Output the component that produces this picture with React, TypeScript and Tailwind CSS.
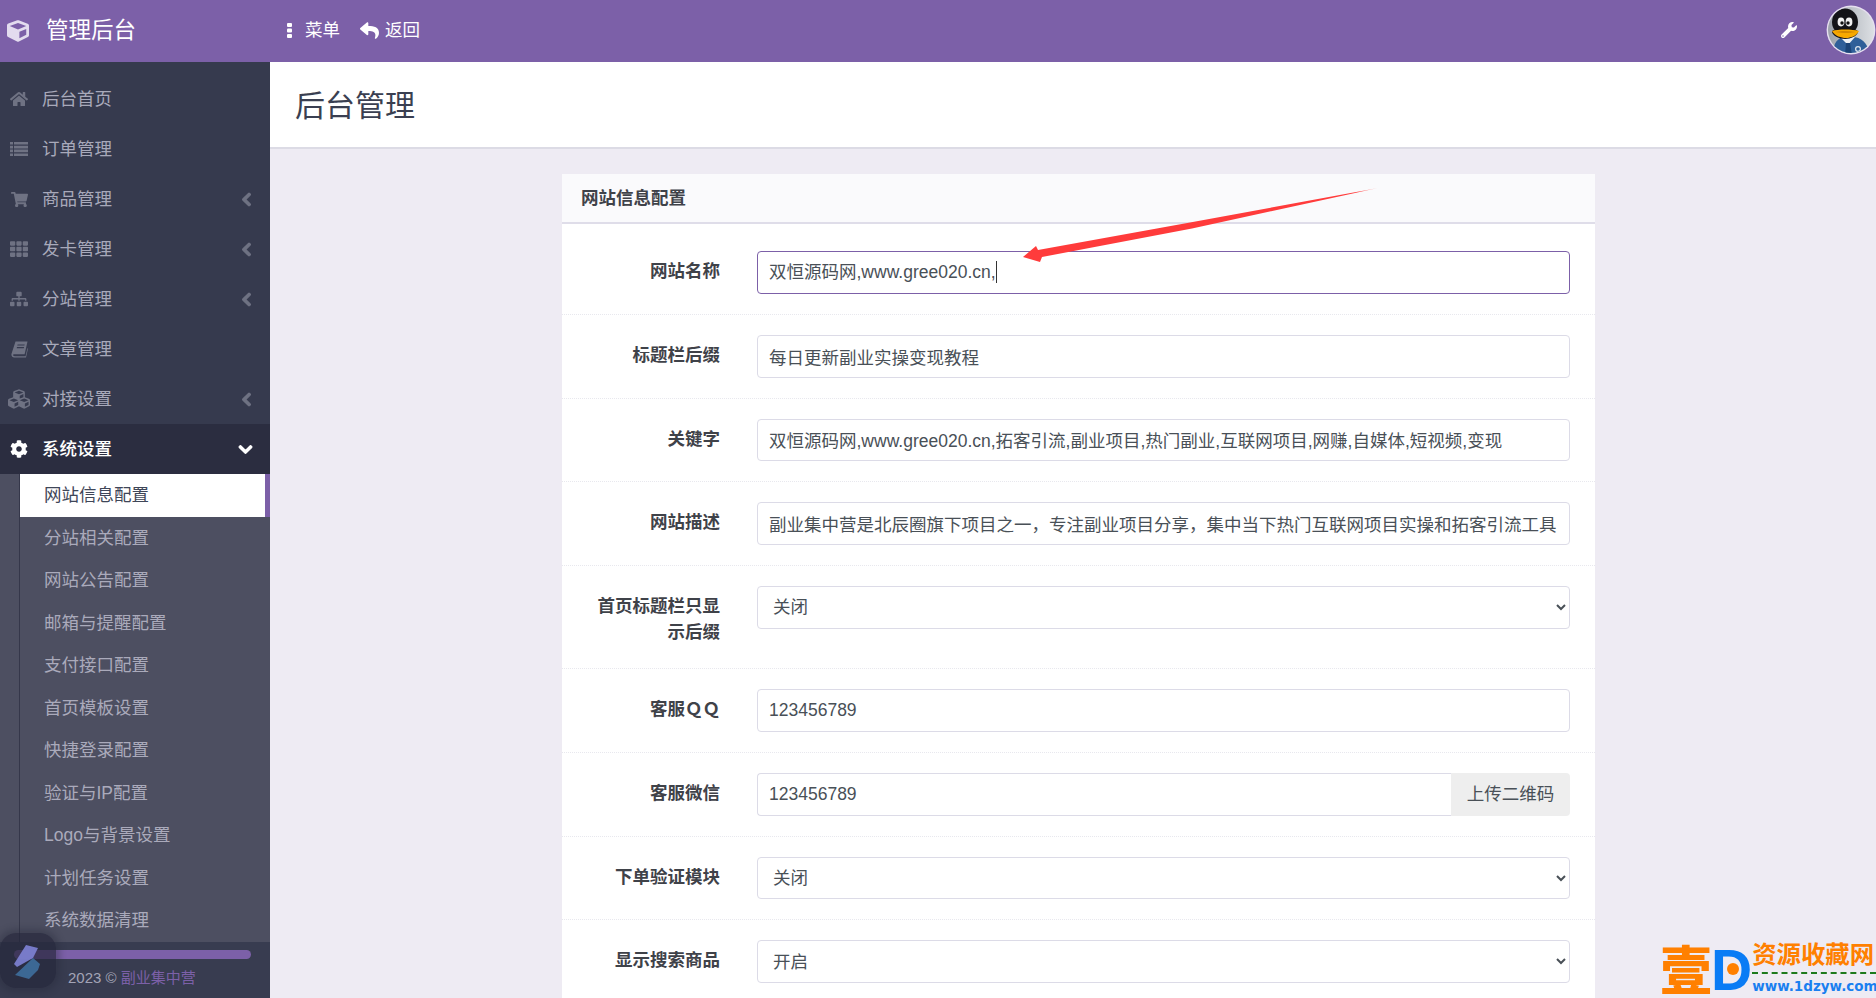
import React from 'react';
import {
  FaChevronDown,
  FaChevronLeft,
  FaCog,
  FaCube,
  FaCubes,
  FaHome,
  FaReply,
  FaShoppingCart,
  FaSitemap,
  FaTh,
  FaWrench
} from 'react-icons/fa';

const fontStack = 'font-["Liberation_Sans","Noto_Sans_CJK_SC",sans-serif]';

const ListIcon: React.FC<{ size?: number }> = ({ size = 18 }) => (
  <svg width={size} height={size * 0.78} viewBox="0 0 18 14" fill="currentColor">
    <path d="M0 0h3v2.6H0zM4 0h14v2.6H4zM0 3.8h3v2.6H0zM4 3.8h14v2.6H4zM0 7.6h3v2.6H0zM4 7.6h14v2.6H4zM0 11.4h3V14H0zM4 11.4h14V14H4z" />
  </svg>
);

const BookIcon: React.FC<{ size?: number }> = ({ size = 17 }) => (
  <svg width={size} height={size} viewBox="0 0 17 17" fill="currentColor">
    <path d="M4.5 0.5H16.5L13.6 13.2H3.2C2.4 13.2 2 13.7 2.2 14.3 2.4 15 3 15.2 3.6 15.2H14.6L16.4 7.2 17 7.6 15 16.4H3.2C1.6 16.4 0.4 15.4 0.4 13.8 0.4 13.4 0.5 13 0.6 12.6ZM6.6 3.4L6.3 4.6H13.4L13.7 3.4ZM6 6L5.7 7.2H12.8L13.1 6Z" fillRule="evenodd" />
  </svg>
);

const EllipsisIcon = () => (
  <svg width="5" height="15" viewBox="0 0 5 15" fill="currentColor">
    <rect width="5" height="4" rx="1" />
    <rect y="5.5" width="5" height="4" rx="1" />
    <rect y="11" width="5" height="4" rx="1" />
  </svg>
);

const menuItems = [
  { name: '后台首页', icon: FaHome, size: 18 },
  { name: '订单管理', icon: ListIcon, size: 18 },
  { name: '商品管理', icon: FaShoppingCart, size: 17, more: true },
  { name: '发卡管理', icon: FaTh, size: 18, more: true },
  { name: '分站管理', icon: FaSitemap, size: 18, more: true },
  { name: '文章管理', icon: BookIcon, size: 17 },
  { name: '对接设置', icon: FaCubes, size: 22, more: true }
];

const subItems = [
  '网站信息配置',
  '分站相关配置',
  '网站公告配置',
  '邮箱与提醒配置',
  '支付接口配置',
  '首页模板设置',
  '快捷登录配置',
  '验证与IP配置',
  'Logo与背景设置',
  '计划任务设置',
  '系统数据清理'
];

const inputClass =
  'h-[42.75px] w-full rounded-[4px] border border-[#dcdbe7] bg-white px-[11px] text-[17.5px] text-[#495057] outline-none';

const Row: React.FC<{ label: React.ReactNode; children: React.ReactNode }> = ({ label, children }) => (
  <div className="flex border-b border-dotted border-[#e8e8ee] py-[20px]">
    <label className="w-[158px] shrink-0 pl-[25px] pt-[7px] pb-[3px] text-right text-[17.5px] leading-[26px] font-bold text-[#3f4249]">
      {label}
    </label>
    <div className="ml-[37px] w-[813px]">{children}</div>
  </div>
);

const TextRow: React.FC<{ label: string; value: string }> = ({ label, value }) => (
  <Row label={label}>
    <input className={inputClass} readOnly value={value} />
  </Row>
);

const SelectRow: React.FC<{ label: string; value: string }> = ({ label, value }) => (
  <Row label={label}>
    <select className={inputClass} defaultValue={value}>
      <option>关闭</option>
      <option>开启</option>
    </select>
  </Row>
);

const Avatar = () => (
  <svg viewBox="0 0 50 50" className="mb-[3px] h-[50px] w-[50px] shrink-0">
    <defs>
      <clipPath id="avatar-clip">
        <circle cx="25" cy="25" r="23" />
      </clipPath>
      <linearGradient id="avatar-bg" x1="0" x2="1" y1="0" y2="0">
        <stop offset="0" stopColor="#9aa0a8" />
        <stop offset="1" stopColor="#dfe2e6" />
      </linearGradient>
    </defs>
    <circle cx="25" cy="25" r="24.4" fill="#e6dff0" />
    <g clipPath="url(#avatar-clip)">
      <rect width="50" height="50" fill="url(#avatar-bg)" />
      <path d="M7 50c0-11 4-18 13-18h6c10 0 16 7 18 18z" fill="#2f5f99" />
      <path d="M14 32l8 8 7-8z" fill="#eef1f4" />
      <path d="M20 38h4l2 12h-7z" fill="#1c4477" />
      <circle cx="32" cy="44" r="2.4" fill="none" stroke="#dfe6ee" strokeWidth="1.2" />
      <ellipse cx="19" cy="17" rx="13" ry="13.5" fill="#141418" />
      <path d="M6 27c0-3 6-3 13-3s13 0 13 3c-1 4-7 7-13 7s-12-3-13-7z" fill="#141418" />
      <ellipse cx="15" cy="17" rx="3.4" ry="4.4" fill="#f2f2f2" />
      <ellipse cx="23" cy="17" rx="3.4" ry="4.4" fill="#f2f2f2" />
      <circle cx="16" cy="18" r="1.7" fill="#111" />
      <circle cx="22" cy="18" r="1.7" fill="#111" />
      <path d="M6 26c6-2 20-2 27 0-3 5-8 7-13 7S9 31 6 26z" fill="#f7a900" />
      <path d="M9 27c6-1 14-1 21 0-6 1-15 1-21 0z" fill="#c67c00" />
    </g>
  </svg>
);

const App: React.FC = () => {
  return (
    <div className={`relative flex h-screen flex-col overflow-hidden bg-[#eeebf3] ${fontStack}`}>
      {/* Top bar */}
      <header className="flex h-[62px] shrink-0 items-center bg-[#7c60a8] text-white">
        <div className="flex w-[270px] items-center pl-[7px]">
          <FaCube size={22} className="text-[#e3dcef]" />
          <span className="ml-[17px] text-[22.5px]">管理后台</span>
        </div>
        <span className="mb-[2px] ml-[17px]">
          <EllipsisIcon />
        </span>
        <span className="mb-[2px] ml-[13px] text-[17.5px]">菜单</span>
        <FaReply size={19} className="mb-[2px] ml-[20px]" />
        <span className="mb-[2px] ml-[6px] text-[17.5px]">返回</span>
        <FaWrench size={16} className="mb-[2px] ml-auto mr-[29px]" />
        <Avatar />
      </header>

      <div className="flex min-h-0 flex-1">
        {/* Sidebar */}
        <aside className="flex w-[270px] shrink-0 flex-col bg-[#363a4e] pt-[12px]">
          {menuItems.map((item) => (
            <div key={item.name} className="flex h-[50px] items-center text-[17.5px] text-[#a8a9ba]">
              <span className="flex w-[38px] justify-center text-[#6f7283]">
                <item.icon size={item.size} />
              </span>
              <span className="ml-[4px]">{item.name}</span>
              {item.more && (
                <FaChevronLeft
                  size={15}
                  stroke="currentColor"
                  strokeWidth={40}
                  className="ml-auto mr-[16px] text-[#6f7283]"
                />
              )}
            </div>
          ))}
          <div className="flex h-[50px] items-center bg-[#2b2d40] text-[17.5px] text-white">
            <span className="flex w-[38px] justify-center">
              <FaCog size={18} />
            </span>
            <span className="ml-[4px] font-medium">系统设置</span>
            <FaChevronDown size={15} stroke="currentColor" strokeWidth={40} className="ml-auto mr-[17px]" />
          </div>
          <div className="flex-1 bg-[#4d4f61] pl-[19px]">
            <div className="border-l border-[#35374a]">
              {subItems.map((item, index) =>
                index === 0 ? (
                  <div
                    key={item}
                    className="flex h-[42.5px] items-center border-r-[5px] border-[#7c60a8] bg-white pl-[24px] text-[17.5px] text-[#3f4658]"
                  >
                    {item}
                  </div>
                ) : (
                  <div key={item} className="flex h-[42.5px] items-center pl-[24px] text-[17.5px] text-[#aaaabb]">
                    {item}
                  </div>
                )
              )}
            </div>
          </div>
          <div className="h-[56px] shrink-0 bg-[#383c50] pl-[14px] pr-[19px] pt-[8px]">
            <div className="h-[9px] rounded-full bg-[#7c60a8]" />
            <div className="mt-[8px] pl-[54px] text-[15px] leading-[22px] whitespace-nowrap text-[#a3a4b6]">
              2023 © <span className="text-[#7c60a8]">副业集中营</span>
            </div>
          </div>
        </aside>

        {/* Content */}
        <main className="min-w-0 flex-1">
          <div className="flex h-[87px] items-center border-b-2 border-[#dcdbe5] bg-white pl-[25px] pt-[1px] text-[30px] text-[#3a3f51]">
            后台管理
          </div>
          <section className="ml-[292px] mt-[25px] w-[1033px] rounded-t-[3px] bg-white">
            <div className="flex h-[50px] items-center border-b-2 border-[#dfdde9] bg-[#fafafc] pl-[19px] text-[17.5px] font-bold text-[#3f4249]">
              网站信息配置
            </div>
            <div className="pt-[7px]">
              <Row label="网站名称">
                <div className="flex h-[42.75px] items-center rounded-[4px] border border-[#7c60a8] bg-white px-[11px] text-[17.5px] text-[#495057]">
                  双恒源码网,www.gree020.cn,
                  <span className="h-[22px] w-px bg-[#333]" />
                </div>
              </Row>
              <TextRow label="标题栏后缀" value="每日更新副业实操变现教程" />
              <TextRow
                label="关键字"
                value="双恒源码网,www.gree020.cn,拓客引流,副业项目,热门副业,互联网项目,网赚,自媒体,短视频,变现"
              />
              <TextRow
                label="网站描述"
                value="副业集中营是北辰圈旗下项目之一，专注副业项目分享，集中当下热门互联网项目实操和拓客引流工具"
              />
              <SelectRow label="首页标题栏只显示后缀" value="关闭" />
              <TextRow label="客服ＱＱ" value="123456789" />
              <Row label="客服微信">
                <div className="flex">
                  <input className={`${inputClass} rounded-r-none border-r-0`} readOnly value="123456789" />
                  <span className="flex h-[42.75px] w-[119px] shrink-0 items-center justify-center rounded-r-[4px] bg-[#eeeeee] text-[17.5px] text-[#495057]">
                    上传二维码
                  </span>
                </div>
              </Row>
              <SelectRow label="下单验证模块" value="关闭" />
              <SelectRow label="显示搜索商品" value="开启" />
            </div>
          </section>
        </main>
      </div>

      {/* Red annotation arrow */}
      <svg className="absolute left-[1020px] top-[185px]" width="360" height="80" viewBox="0 0 360 80">
        <defs>
          <linearGradient id="arrow-fade" x1="0" x2="1" y1="0" y2="0">
            <stop offset="0.94" stopColor="#ff3b3b" />
            <stop offset="1" stopColor="#ff3b3b" stopOpacity="0.25" />
          </linearGradient>
        </defs>
        <path d="M3 72 L16 61 L18 65 L170 37.5 L358 3 L172 43.5 L22 72 L20 77 Z" fill="url(#arrow-fade)" />
      </svg>

      {/* Floating badge, bottom left */}
      <div className="absolute left-0 top-[933px] h-[55px] w-[56px] rounded-[16px] bg-[#25273a]/70 shadow-[0_0_6px_4px_rgba(37,39,58,0.35)]">
        <svg width="56" height="55" viewBox="0 0 56 55" className="opacity-90">
          <path d="M26 12 L38 15 L33 25 L17 34 L14 31 Z" fill="#7f83d6" />
          <path d="M15 42 L33 25 L40 31 L38 37 L29 46 Z" fill="#3f6f9e" />
        </svg>
      </div>

      {/* Watermark, bottom right */}
      <div className="absolute left-[1660px] top-[940px] flex h-[56px] w-[216px] items-start">
        <span className='text-[52px] leading-[56px] font-black text-[#ff8000] font-["Noto_Sans_CJK_SC",sans-serif]'>壹</span>
        <span className="relative ml-[-1px] mt-[2px] text-[57px] leading-[56px] font-bold text-[#0a7cf5]">
          D
          <span className="absolute left-[16px] top-[21px] h-[12px] w-[12px] rounded-full bg-[#ff8000]" />
        </span>
        <div className="min-w-0 flex-1">
          <div className="text-[24.4px] leading-[30px] font-bold whitespace-nowrap text-[#ff8000]">资源收藏网</div>
          <div className="mt-[2px] border-t-2 border-dashed border-[#1d7a1d]" />
          <div className='mt-[2px] text-[13.5px] leading-[20px] font-bold whitespace-nowrap text-[#1a7ff0] font-["DejaVu_Sans",sans-serif]'>
            www.1dzyw.com
          </div>
        </div>
      </div>
    </div>
  );
};

export default App;
